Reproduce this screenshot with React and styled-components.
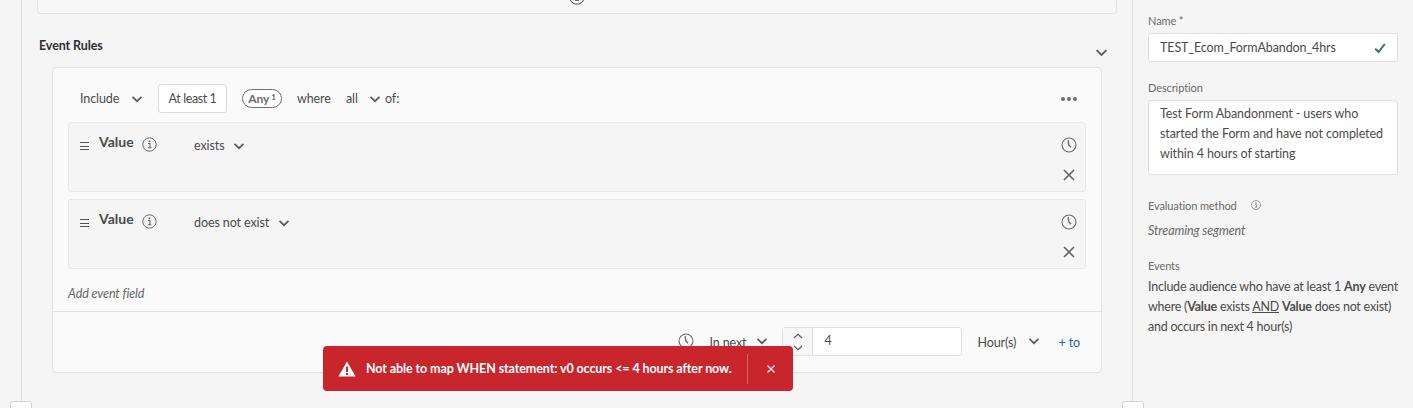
import React from "react";
import styled, { createGlobalStyle } from "styled-components";

const GlobalStyle = createGlobalStyle`
  html, body {
    margin: 0;
    height: 100%;
    overflow: hidden;
    background: #f5f5f5;
  }
  body {
    font-family: Lato, "Noto Sans", sans-serif;
    font-size: 12.5px;
    letter-spacing: -0.1px;
    color: #4b4b4b;
  }
`;

function Chevron({ size = 12 }) {
  return (
    <svg width={size} height={size} viewBox="0 0 12 12" fill="none">
      <path d="M1.5 3.8 6 8.2l4.5-4.4" stroke="#5c5c5c" strokeWidth="1.7" />
    </svg>
  );
}

function Clock() {
  return (
    <svg width="16" height="16" viewBox="0 0 16 16" fill="none">
      <circle cx="8" cy="8" r="7" stroke="#6a6a6a" strokeWidth="1.1" />
      <path d="M7.2 3.2 7.8 8l2.2 2.2" stroke="#6a6a6a" strokeWidth="1.4" />
    </svg>
  );
}

function InfoIcon({ size = 15 }) {
  return (
    <svg width={size} height={size} viewBox="0 0 15 15" fill="none">
      <circle cx="7.5" cy="7.5" r="6.7" stroke="#6a6a6a" strokeWidth="1" />
      <circle cx="7.5" cy="4.3" r="1" fill="#6a6a6a" />
      <path d="M6 6.5h2v4M5.8 10.7h3.6" stroke="#6a6a6a" strokeWidth="1.1" />
    </svg>
  );
}

function Cross() {
  return (
    <svg width="12" height="12" viewBox="0 0 12 12" fill="none">
      <path d="M1 1l10 10M11 1 1 11" stroke="#636363" strokeWidth="1.6" />
    </svg>
  );
}

function Rule({ label }) {
  return (
    <RuleRow>
      <Handle>
        <span />
        <span />
        <span />
      </Handle>
      <RuleName>Value</RuleName>
      <InfoSlot>
        <InfoIcon />
      </InfoSlot>
      <Operator>
        {label}
        <Chevron />
      </Operator>
      <RuleActions>
        <Clock />
        <Cross />
      </RuleActions>
    </RuleRow>
  );
}

export default function App() {
  return (
    <Page>
      <GlobalStyle />
      <Rail />
      <Main>
        <TopCard>
          <TopInfo>
            <InfoIcon size={16} />
          </TopInfo>
        </TopCard>
        <SectionHead>
          <SectionTitle>Event Rules</SectionTitle>
          <SectionChevron>
            <Chevron size={13} />
          </SectionChevron>
        </SectionHead>
        <RuleCard>
          <CardBody>
            <HeaderRow>
              <Word $w={51}>Include</Word>
              <Chevron />
              <CountBox>At least 1</CountBox>
              <Pill>
                Any<sup>1</sup>
              </Pill>
              <Word $w={49} $ml={15}>where</Word>
              <Word $w={23}>all</Word>
              <Chevron />
              <Word $ml={4}>of:</Word>
              <Dots>
                <i />
                <i />
                <i />
              </Dots>
            </HeaderRow>
            <Rule label="exists" />
            <Rule label="does not exist" />
            <AddField>Add event field</AddField>
          </CardBody>
          <Footer>
            <Clock />
            <Word $w={47} $ml={15}>In next</Word>
            <Chevron />
            <Stepper>
              <StepArrows>
                <svg width="10" height="22" viewBox="0 0 10 22" fill="none">
                  <path d="M1 7l4-3.6L9 7M1 15l4 3.6L9 15" stroke="#5c5c5c" strokeWidth="1.2" />
                </svg>
              </StepArrows>
              <StepValue>4</StepValue>
            </Stepper>
            <Word $w={51} $ml={15}>Hour(s)</Word>
            <Chevron />
            <AddLink>+ to</AddLink>
          </Footer>
        </RuleCard>
      </Main>
      <Side>
        <Label>Name *</Label>
        <NameInput>
          TEST_Ecom_FormAbandon_4hrs
          <svg width="12" height="12" viewBox="0 0 12 12" fill="none">
            <path d="M1.2 6.6 4.5 10 10.8 2" stroke="#1f7a5c" strokeWidth="2" />
          </svg>
        </NameInput>
        <Label $mt={18}>Description</Label>
        <DescBox>
          Test Form Abandonment - users who started the Form and have not completed within 4 hours of starting
        </DescBox>
        <Label $mt={23}>
          Evaluation method
          <SmallInfo>
            <InfoIcon size={10} />
          </SmallInfo>
        </Label>
        <Streaming>Streaming segment</Streaming>
        <Label $mt={20}>Events</Label>
        <Summary>
          Include audience who have at least 1 <b>Any</b> event
          <br />
          where (<b>Value</b> exists <u>AND</u> <b>Value</b> does not exist)
          <br />
          and occurs in next 4 hour(s)
        </Summary>
      </Side>
      <Toast>
        <svg width="18" height="16" viewBox="0 0 18 16">
          <path d="M9 .5 17.6 15.5H.4z" fill="#fff" />
          <path d="M8 5.5h2v5.5H8zM8 12h2v2H8z" fill="#c9252d" />
        </svg>
        <ToastText>Not able to map WHEN statement: v0 occurs &lt;= 4 hours after now.</ToastText>
        <ToastClose>
          <svg width="8" height="8" viewBox="0 0 8 8" fill="none">
            <path d="M.5.5l7 7M7.5.5l-7 7" stroke="#fff" strokeWidth="1.1" />
          </svg>
        </ToastClose>
      </Toast>
      <EdgeButton $left={10} />
      <EdgeButton $left={1122} />
    </Page>
  );
}

const Page = styled.div`
  display: flex;
  width: 1413px;
  height: 408px;
  overflow: hidden;
  position: relative;
`;

const Rail = styled.div`
  width: 21px;
  flex: none;
  border-right: 1px solid #dedede;
`;

const Main = styled.main`
  flex: 1;
  min-width: 0;
  padding: 0 15px;
`;

const TopCard = styled.div`
  height: 13px;
  background: #f7f7f7;
  border: 1px solid #e0e0e0;
  border-top: none;
  border-radius: 0 0 4px 4px;
  position: relative;
`;

const TopInfo = styled.span`
  position: absolute;
  left: 531px;
  top: -11px;
`;

const SectionHead = styled.div`
  display: flex;
  justify-content: space-between;
  align-items: center;
  height: 53px;
  padding-left: 2px;
`;

const SectionTitle = styled.h3`
  margin: 9px 0 0;
  font-size: 12.5px;
  font-weight: 700;
  color: #2f2f2f;
`;

const SectionChevron = styled.span`
  display: flex;
  margin: 23px 9px 0 0;
`;

const RuleCard = styled.section`
  margin: 0 15px 0 15px;
  height: 306px;
  box-sizing: border-box;
  background: #fafafa;
  border: 1px solid #e1e1e1;
  border-radius: 4px;
  display: flex;
  flex-direction: column;
`;

const CardBody = styled.div`
  padding: 16px 15px 0;
  height: 244px;
  box-sizing: border-box;
  border-bottom: 1px solid #e1e1e1;
`;

const HeaderRow = styled.div`
  display: flex;
  align-items: center;
  height: 29px;
  padding-left: 12px;
  margin-bottom: 9px;
`;

const Word = styled.span`
  width: ${(p) => (p.$w ? `${p.$w}px` : "auto")};
  margin-left: ${(p) => p.$ml || 0}px;
  white-space: nowrap;
  flex: none;
`;

const CountBox = styled.div`
  display: flex;
  align-items: center;
  justify-content: center;
  width: 69px;
  height: 29px;
  margin-left: 15px;
  box-sizing: border-box;
  background: #fff;
  border: 1px solid #dcdcdc;
  border-radius: 3px;
  letter-spacing: -0.4px;
`;

const Pill = styled.div`
  display: flex;
  align-items: center;
  justify-content: center;
  width: 40px;
  height: 19px;
  margin-left: 15px;
  box-sizing: border-box;
  border: 1px solid #6e6e6e;
  border-radius: 10px;
  background: #fff;
  font-size: 12px;
  font-weight: 700;
  color: #6a6a6a;
  sup {
    font-size: 8px;
    margin: -4px 0 0 2px;
    line-height: 1;
  }
`;

const Dots = styled.div`
  margin-left: auto;
  margin-right: 9px;
  display: flex;
  gap: 2px;
  i {
    width: 4px;
    height: 4px;
    border-radius: 50%;
    background: #6e6e6e;
  }
`;

const RuleRow = styled.div`
  display: flex;
  align-items: flex-start;
  height: 70px;
  box-sizing: border-box;
  margin-bottom: 7px;
  padding: 12px 8px 0 11px;
  background: #f5f5f5;
  border: 1px solid #e9e9e9;
  border-radius: 3px;
`;

const Handle = styled.div`
  display: flex;
  flex-direction: column;
  gap: 2.5px;
  width: 9px;
  margin-top: 7px;
  span {
    display: block;
    height: 1px;
    background: #555;
  }
`;

const RuleName = styled.strong`
  margin-left: 10px;
  margin-top: -1px;
  width: 43px;
  font-size: 14px;
  line-height: 16px;
  letter-spacing: 0;
  color: #4b4b4b;
`;

const InfoSlot = styled.span`
  display: flex;
  margin-top: 2px;
  width: 52px;
`;

const Operator = styled.div`
  display: flex;
  align-items: center;
  gap: 9px;
  margin-top: 3px;
`;

const RuleActions = styled.div`
  margin-left: auto;
  display: flex;
  flex-direction: column;
  align-items: center;
  gap: 16px;
  width: 16px;
  margin-top: 2px;
`;

const AddField = styled.div`
  margin-top: 17px;
  font-style: italic;
  color: #666;
`;

const Footer = styled.div`
  flex: 1;
  display: flex;
  align-items: flex-start;
  padding: 15px 21px 0 0;
  justify-content: flex-end;
  line-height: 29px;
  & > svg:first-child {
    margin-top: 6px;
  }
  & > svg {
    margin-top: 8px;
  }
  & > span {
    line-height: 31px;
  }
`;

const Stepper = styled.div`
  display: flex;
  width: 180px;
  height: 29px;
  margin-left: 14px;
  box-sizing: border-box;
  background: #fff;
  border: 1px solid #e1e1e1;
  border-radius: 3px;
`;

const StepArrows = styled.div`
  display: flex;
  align-items: center;
  justify-content: center;
  width: 29px;
  background: #f7f7f7;
  border-right: 1px solid #e1e1e1;
`;

const StepValue = styled.div`
  padding-left: 11px;
  line-height: 26px;
`;

const AddLink = styled.span`
  margin-left: 18px;
  color: #1f5fb0;
`;

const Side = styled.aside`
  width: 281px;
  flex: none;
  box-sizing: border-box;
  padding: 13px 15px 0 15px;
  border-left: 1px solid #dedede;
`;

const Label = styled.div`
  display: flex;
  align-items: center;
  height: 14px;
  margin-top: ${(p) => p.$mt || 0}px;
  font-size: 11px;
  color: #6b6b6b;
`;

const SmallInfo = styled.span`
  display: flex;
  margin-left: 14px;
`;

const NameInput = styled.div`
  display: flex;
  align-items: center;
  justify-content: space-between;
  height: 29px;
  margin-top: 6px;
  padding: 0 11px;
  box-sizing: border-box;
  background: #fff;
  border: 1px solid #e1e1e1;
  border-radius: 3px;
`;

const DescBox = styled.div`
  height: 75px;
  margin-top: 6px;
  padding: 3px 11px 0;
  box-sizing: border-box;
  background: #fff;
  border: 1px solid #e1e1e1;
  border-radius: 3px;
  line-height: 20px;
`;

const Streaming = styled.div`
  margin-top: 11px;
  font-style: italic;
  color: #666;
`;

const Summary = styled.p`
  margin: 5px 0 0;
  line-height: 20px;
  letter-spacing: -0.23px;
  white-space: nowrap;
  color: #4b4b4b;
  b {
    font-weight: 700;
  }
`;

const Toast = styled.div`
  position: absolute;
  left: 323px;
  top: 346px;
  width: 470px;
  height: 45px;
  display: flex;
  align-items: center;
  padding-left: 15px;
  box-sizing: border-box;
  background: #c9252d;
  border-radius: 4px;
  color: #fff;
`;

const ToastText = styled.span`
  margin-left: 10px;
  width: 381px;
  font-weight: 700;
  white-space: nowrap;
`;

const ToastClose = styled.span`
  display: flex;
  align-items: center;
  justify-content: center;
  height: 30px;
  flex: 1;
  border-left: 1px solid #d9606a;
`;

const EdgeButton = styled.div`
  position: absolute;
  left: ${(p) => p.$left}px;
  top: 401px;
  width: 22px;
  height: 22px;
  box-sizing: border-box;
  background: #fff;
  border: 1px solid #cfcfcf;
  border-radius: 3px;
`;
